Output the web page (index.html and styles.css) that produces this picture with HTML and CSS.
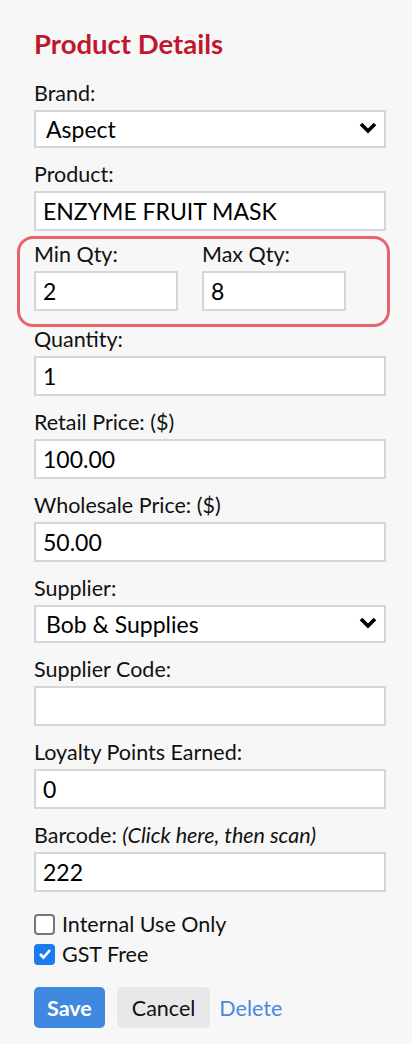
FILE: index.html
```html
<!DOCTYPE html>
<html lang="en">
<head>
    <meta charset="UTF-8">
    <meta name="viewport" content="width=device-width, initial-scale=1.0">
    <title>Product Details</title>
    <link rel="stylesheet" href="styles.css">
</head>
<body>
    <form class="product-form">
        <h1 class="form-title">Product Details</h1>

        <div class="field">
            <label for="brand">Brand:</label>
            <div class="select-wrap">
                <select id="brand" name="brand">
                    <option>Aspect</option>
                </select>
                <svg class="chevron" width="18" height="12" viewBox="0 0 18 12"><polyline points="2,2 9,9 16,2" fill="none" stroke="#000" stroke-width="3.6"/></svg>
            </div>
        </div>

        <div class="field">
            <label for="product">Product:</label>
            <input type="text" id="product" name="product" value="ENZYME FRUIT MASK">
        </div>

        <div class="qty-group">
            <div class="field">
                <label for="minQty">Min Qty:</label>
                <input type="text" id="minQty" name="minQty" value="2">
            </div>
            <div class="field">
                <label for="maxQty">Max Qty:</label>
                <input type="text" id="maxQty" name="maxQty" value="8">
            </div>
        </div>

        <div class="field field-tight">
            <label for="quantity">Quantity:</label>
            <input type="text" id="quantity" name="quantity" value="1">
        </div>

        <div class="field">
            <label for="retail">Retail Price: ($)</label>
            <input type="text" id="retail" name="retail" value="100.00">
        </div>

        <div class="field">
            <label for="wholesale">Wholesale Price: ($)</label>
            <input type="text" id="wholesale" name="wholesale" value="50.00">
        </div>

        <div class="field">
            <label for="supplier">Supplier:</label>
            <div class="select-wrap">
                <select id="supplier" name="supplier">
                    <option>Bob &amp; Supplies</option>
                </select>
                <svg class="chevron" width="18" height="12" viewBox="0 0 18 12"><polyline points="2,2 9,9 16,2" fill="none" stroke="#000" stroke-width="3.6"/></svg>
            </div>
        </div>

        <div class="field">
            <label for="supplierCode">Supplier Code:</label>
            <input type="text" id="supplierCode" name="supplierCode" value="">
        </div>

        <div class="field">
            <label for="loyalty">Loyalty Points Earned:</label>
            <input type="text" id="loyalty" name="loyalty" value="0">
        </div>

        <div class="field">
            <label for="barcode">Barcode: <em>(Click here, then scan)</em></label>
            <input type="text" id="barcode" name="barcode" value="222">
        </div>

        <div class="checks">
            <label class="check">
                <span class="box"></span>
                Internal Use Only
            </label>
            <label class="check">
                <span class="box box-on">
                    <svg width="14" height="12" viewBox="0 0 14 12"><polyline points="2,6 5.5,9.5 12,2" fill="none" stroke="#fff" stroke-width="2.6"/></svg>
                </span>
                GST Free
            </label>
        </div>

        <div class="actions">
            <button type="submit" class="btn btn-save">Save</button>
            <button type="button" class="btn btn-cancel">Cancel</button>
            <a href="#" class="link-delete">Delete</a>
        </div>
    </form>
</body>
</html>
```

FILE: styles.css
```css
body {
    margin: 0;
    background-color: #f7f7f7;
    font-family: Lato, "Open Sans", sans-serif;
    color: #111;
}
.product-form {
    width: 352px;
    padding: 28px 0 0 34px;
    display: flex;
    flex-direction: column;
}
.form-title {
    margin: 0;
    font-size: 27.5px;
    line-height: 31px;
    font-weight: bold;
    color: #c0172f;
}
.field {
    display: flex;
    flex-direction: column;
    margin-top: 14px;
}
.form-title + .field {
    margin-top: 22px;
}
.field-tight {
    margin-top: 0;
}
.field label {
    font-size: 21.5px;
    line-height: 24px;
    margin-bottom: 5px;
}
.field label em {
    font-style: italic;
}
.field input {
    box-sizing: border-box;
    height: 40px;
    width: 100%;
    margin: 0;
    padding: 0 7px;
    border: 2px solid #d6d6d6;
    border-radius: 0;
    background: #fff;
    font-family: inherit;
    font-size: 23px;
    color: #000;
    outline: none;
}
.select-wrap {
    position: relative;
}
.select-wrap select {
    box-sizing: border-box;
    appearance: none;
    -webkit-appearance: none;
    width: 100%;
    height: 38px;
    margin: 0;
    padding: 0 10px;
    border: 2px solid #d6d6d6;
    border-radius: 0;
    background: #fff;
    font-family: inherit;
    font-size: 23px;
    color: #000;
}
.chevron {
    position: absolute;
    right: 9px;
    top: 12px;
    pointer-events: none;
}
.qty-group {
    display: flex;
    gap: 24px;
    margin: 5px -4px 0 -17px;
    padding: 3px 14px 13px 14px;
    border: 3px solid #e8636b;
    border-radius: 16px;
}
.qty-group .field {
    margin-top: 0;
    width: 144px;
}
.checks {
    display: flex;
    flex-direction: column;
    gap: 6px;
    margin-top: 20px;
}
.check {
    display: flex;
    align-items: center;
    gap: 7px;
    font-size: 21.5px;
    line-height: 24px;
}
.box {
    box-sizing: border-box;
    width: 21px;
    height: 21px;
    border: 2px solid #767676;
    border-radius: 4px;
    background: #fff;
    display: flex;
    align-items: center;
    justify-content: center;
}
.box-on {
    background: #1a7cf0;
    border-color: #1a7cf0;
}
.actions {
    display: flex;
    align-items: center;
    gap: 12px;
    margin-top: 21px;
}
.btn {
    height: 41px;
    padding: 0 15px;
    border: none;
    border-radius: 5px;
    font-family: inherit;
    font-size: 21.5px;
    cursor: pointer;
}
.btn-save {
    background-color: #3f88e0;
    color: #fff;
    font-weight: bold;
    padding: 0 13px;
}
.btn-cancel {
    background-color: #e8e8e8;
    color: #111;
}
.link-delete {
    margin-left: -3px;
    font-size: 21.5px;
    color: #4a88dd;
    text-decoration: none;
}
```
